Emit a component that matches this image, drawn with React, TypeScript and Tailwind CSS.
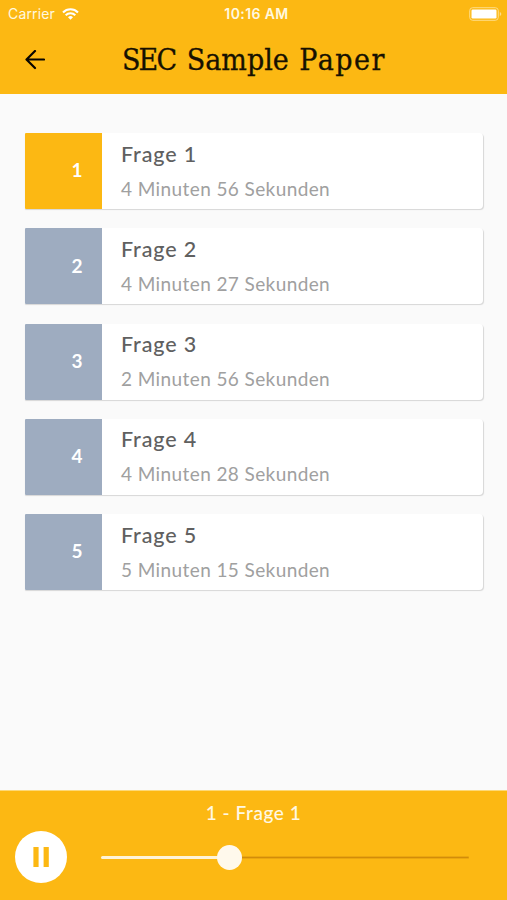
import React, { useState } from 'react';

interface Question {
  id: number;
  title: string;
  duration: string;
}

interface QuestionCardProps {
  question: Question;
  active: boolean;
  onSelect: (id: number) => void;
}

const questions: Question[] = [
  { id: 1, title: 'Frage 1', duration: '4 Minuten 56 Sekunden' },
  { id: 2, title: 'Frage 2', duration: '4 Minuten 27 Sekunden' },
  { id: 3, title: 'Frage 3', duration: '2 Minuten 56 Sekunden' },
  { id: 4, title: 'Frage 4', duration: '4 Minuten 28 Sekunden' },
  { id: 5, title: 'Frage 5', duration: '5 Minuten 15 Sekunden' }
];

const StatusBar: React.FC = () => (
  <div className="h-[27px] pl-2 pr-[5px] grid grid-cols-3 items-center text-white font-['Inter',sans-serif] leading-none">
    <div className="flex items-center gap-[7px]">
      <span className="text-[14px] tracking-[0.15px] text-[#fff8e0]">Carrier</span>
      <svg width="17" height="12" viewBox="0 0 17 12" fill="none" stroke="currentColor" strokeWidth="2.1">
        <path d="M1 4.4a10.6 10.6 0 0 1 15 0" />
        <path d="M3.7 7.2a6.8 6.8 0 0 1 9.6 0" />
        <path d="M8.5 11.8 6 9.3a3.5 3.5 0 0 1 5 0z" fill="currentColor" stroke="none" />
      </svg>
    </div>
    <span className="text-center text-[14px] font-semibold tracking-[0.4px] whitespace-nowrap text-[#fff8e0] pl-[3px]">10:16 AM</span>
    <svg className="justify-self-end" width="33" height="14" viewBox="0 0 33 14">
      <rect x="0.7" y="0.7" width="28.6" height="12.6" rx="3" fill="none" stroke="#fedc87" strokeWidth="1" />
      <rect x="2.5" y="2.5" width="25" height="9" rx="1.2" fill="#fff" />
      <path d="M30.8 5v4q1.5-.6 1.5-2t-1.5-2z" fill="#fedc87" />
    </svg>
  </div>
);

const QuestionCard: React.FC<QuestionCardProps> = ({ question, active, onSelect }) => (
  <button
    type="button"
    onClick={() => onSelect(question.id)}
    className="w-full h-[76px] flex text-left bg-white rounded-l-[1px] rounded-r-[4px] overflow-hidden shadow-[0.5px_1px_1px_rgba(0,0,0,0.14)]"
  >
    <span
      className={`w-[76.5px] h-full shrink-0 flex items-center justify-end pr-[19px] pb-px text-[19px] font-bold text-white ${
        active ? 'bg-[#fcb813]' : 'bg-[#9eacc0]'
      }`}
    >
      {question.id}
    </span>
    <span className="pl-[19.5px] pt-[6.5px] flex flex-col">
      <span className="text-[21.5px] leading-[28px] tracking-[0.85px] font-medium text-[#606060]">{question.title}</span>
      <span className="mt-[7px] text-[19px] leading-[28px] tracking-[0.4px] text-[#a0a0a0]">{question.duration}</span>
    </span>
  </button>
);

const App: React.FC = () => {
  const [current, setCurrent] = useState(1);
  const [isPlaying, setIsPlaying] = useState(true);
  const progress = 35;

  return (
    <div className="w-full h-[900px] flex flex-col bg-[#fafafa] font-['Lato',sans-serif]">
      <header className="h-[94px] shrink-0 bg-[#fcb813]">
        <StatusBar />
        <div className="h-[66px] pl-[25px] flex items-center">
          <button type="button" aria-label="Zurück" className="w-5 h-5">
            <svg width="20" height="20" viewBox="0 0 20 20" fill="none" stroke="#080600" strokeWidth="2.2" strokeLinecap="round" strokeLinejoin="round">
              <path d="M19 9.5H2M10 1 1.5 9.5l8.5 8.5" />
            </svg>
          </button>
          <h1 className="ml-[77px] text-[30px] leading-none whitespace-nowrap text-[#171101] [-webkit-text-stroke:0.3px_#171101] [font-stretch:condensed] font-['DejaVu_Serif_Condensed','DejaVu_Serif',serif]">
            <span className="tracking-[-1.9px]">SEC</span>{' '}
            <span className="ml-[3px] tracking-normal">Sample</span>{' '}
            <span className="ml-[2px] tracking-[1.5px]">Paper</span>
          </h1>
        </div>
      </header>

      <main className="flex-1 pl-[25px] pr-6 pt-[39px] flex flex-col gap-[19.3px]">
        {questions.map((question) => (
          <QuestionCard
            key={question.id}
            question={question}
            active={question.id === current}
            onSelect={setCurrent}
          />
        ))}
      </main>

      <footer className="h-[110px] shrink-0 bg-[#fcb813] border-t border-[#fdd978]">
        <p className="pt-[9px] text-center text-[19px] leading-[26px] tracking-[0.55px] font-medium text-[#fff8e4]">
          {current} - Frage {current}
        </p>
        <div className="mt-[5px] pl-[15px] pr-[38px] flex items-center">
          <button
            type="button"
            aria-label="Pause"
            onClick={() => setIsPlaying(!isPlaying)}
            className="w-[52px] h-[52px] shrink-0 rounded-full bg-white flex items-center justify-center text-[#fcb813]"
          >
            <svg width="18" height="20" viewBox="0 0 18 20" fill="currentColor">
              {isPlaying ? <path d="M1.4 0h5.2v20H1.4zM11.6 0h5.2v20h-5.2z" /> : <path d="M3 0v20l14-10z" />}
            </svg>
          </button>
          <div className="ml-[34px] flex-1 h-6 flex items-center">
            <div className="h-[3px] bg-[#fff4d8] rounded-l-full" style={{ width: `${progress}%` }} />
            <div className="relative z-10 w-[25px] h-[25px] -mx-[12.5px] shrink-0 rounded-full bg-[#fff9ec]" />
            <div className="flex-1 h-[3px] bg-[#d28c0a] border-y border-[#eba70f] rounded-r-full" />
          </div>
        </div>
      </footer>
    </div>
  );
};

export default App;
